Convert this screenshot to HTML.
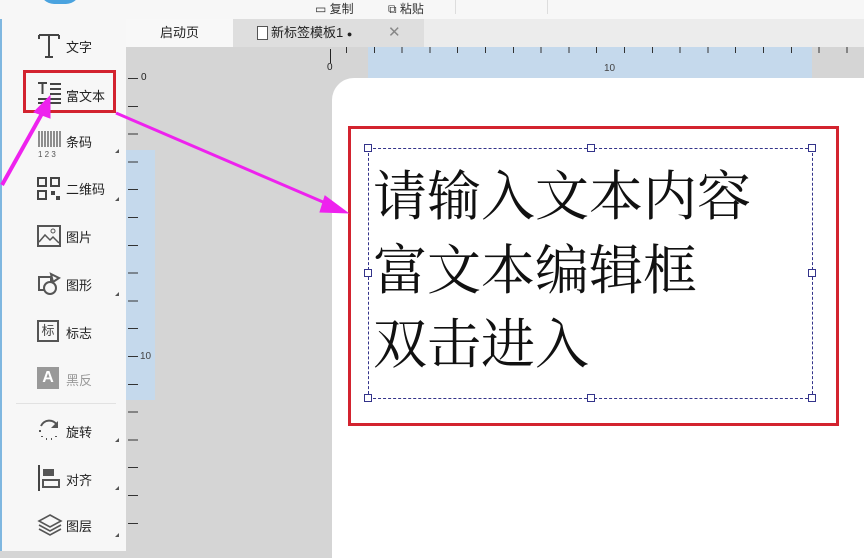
<!DOCTYPE html>
<html><head><meta charset="utf-8"><style>
*{margin:0;padding:0;box-sizing:border-box}
body{width:864px;height:551px;overflow:hidden;position:relative;background:#d5d5d5;font-family:"Liberation Sans","Noto Sans CJK SC",sans-serif}
.abs{position:absolute}
.top{left:0;top:0;width:864px;height:19px;background:#f7f7f7}
.left{left:0;top:19px;width:126px;height:532px;background:#f7f7f7;border-left:2px solid #7fb7e0}
.item{position:absolute;left:64px;font-size:13px;color:#222}
.tri{position:absolute;left:113px;width:0;height:0;border-left:4px solid transparent;border-bottom:4px solid #555}
.ic{position:absolute;left:35px}
</style></head><body>
<div class="abs top"></div>
<div class="abs" style="left:40px;top:-10px;width:40px;height:14px;border-radius:0 0 20px 20px;background:#4aa3df"></div>
<div class="abs" style="left:315px;top:0;font-size:12px;color:#333">▭ 复制</div>
<div class="abs" style="left:388px;top:0;font-size:12px;color:#333">⧉ 粘贴</div>
<div class="abs" style="left:455px;top:0;width:1px;height:14px;background:#ddd"></div>
<div class="abs" style="left:547px;top:0;width:1px;height:14px;background:#ddd"></div>
<!-- tabs -->
<div class="abs" style="left:126px;top:19px;width:738px;height:28px;background:#ececec"></div>
<div class="abs" style="left:126px;top:19px;width:107px;height:28px;background:#f8f8f8;font-size:13px;text-align:center;line-height:28px;color:#222">启动页</div>
<div class="abs" style="left:233px;top:19px;width:191px;height:28px;background:#dedede;font-size:13px;line-height:28px;color:#222;padding-left:38px">新标签模板1 <span style="font-size:9px">●</span><span style="position:absolute;left:155px;color:#888;font-size:15px">✕</span></div>
<div class="abs" style="left:257px;top:26px;width:11px;height:14px;border:1px solid #555;background:#fff"></div>
<!-- ruler top -->
<div class="abs" style="left:368px;top:47px;width:444px;height:31px;background:#c5d9ec"></div>
<div class="abs" style="left:330px;top:49px;width:1px;height:14px;background:#222"></div>
<div class="abs" style="left:327px;top:62px;font-size:10px;color:#222">0</div>
<div class="abs" style="left:604px;top:63px;font-size:10px;color:#444">10</div>
<div class="abs" style="left:346px;top:47px;width:520px;height:6px;background:repeating-linear-gradient(90deg,#333 0 1px,transparent 1px 27.8px)"></div>
<!-- ruler left -->
<div class="abs" style="left:126px;top:150px;width:29px;height:250px;background:#c5d9ec"></div>
<div class="abs" style="left:128px;top:78px;width:10px;height:470px;background:repeating-linear-gradient(180deg,#333 0 1px,transparent 1px 27.8px)"></div>
<div class="abs" style="left:141px;top:72px;font-size:10px;color:#222">0</div>
<div class="abs" style="left:140px;top:351px;font-size:10px;color:#444">10</div>
<!-- label -->
<div class="abs" style="left:332px;top:78px;width:540px;height:480px;background:#fff;border-radius:22px 0 0 0"></div>
<div class="abs" style="left:348px;top:126px;width:491px;height:300px;border:3px solid #d3232f"></div>
<div class="abs" style="left:368px;top:148px;width:445px;height:251px;border:1px dashed #33338a"></div>
<div class="abs" style="left:364px;top:144px;width:8px;height:8px;border:1px solid #33338a;background:#fff"></div>
<div class="abs" style="left:587px;top:144px;width:8px;height:8px;border:1px solid #33338a;background:#fff"></div>
<div class="abs" style="left:808px;top:144px;width:8px;height:8px;border:1px solid #33338a;background:#fff"></div>
<div class="abs" style="left:364px;top:269px;width:8px;height:8px;border:1px solid #33338a;background:#fff"></div>
<div class="abs" style="left:808px;top:269px;width:8px;height:8px;border:1px solid #33338a;background:#fff"></div>
<div class="abs" style="left:364px;top:394px;width:8px;height:8px;border:1px solid #33338a;background:#fff"></div>
<div class="abs" style="left:587px;top:394px;width:8px;height:8px;border:1px solid #33338a;background:#fff"></div>
<div class="abs" style="left:808px;top:394px;width:8px;height:8px;border:1px solid #33338a;background:#fff"></div>
<div class="abs" style="left:373px;top:156px;font-family:'Noto Serif CJK SC',serif;font-size:54px;line-height:74px;color:#111">请输入文本内容<br>富文本编辑框<br>双击进入</div>
<!-- left panel -->
<div class="abs left">
<svg class="ic" style="top:14px" width="24" height="26"><path d="M2 2H22M2 2V6M22 2V6M12 2V24M8 24H16" stroke="#444" stroke-width="2" fill="none"/></svg>
<div class="item" style="top:18px">文字</div>
<svg class="ic" style="top:62px" width="26" height="24"><path d="M1 2H10M5.5 2V13M13 3H24M13 8H24M13 13H24M1 18H24M1 22H24" stroke="#444" stroke-width="2" fill="none"/></svg>
<div class="item" style="top:67px">富文本</div>
<svg class="ic" style="top:112px" width="24" height="28"><path d="M2 0V16M5 0V16M8 0V16M11 0V16M14 0V16M17 0V16M20 0V16M23 0V16" stroke="#555" stroke-width="1.3"/><text x="1" y="26" font-size="8" fill="#555">1 2 3</text></svg>
<div class="item" style="top:113px">条码</div><div class="tri" style="top:130px"></div>
<svg class="ic" style="top:158px" width="24" height="24"><g fill="none" stroke="#444" stroke-width="2"><rect x="1" y="1" width="8" height="8"/><rect x="14" y="1" width="8" height="8"/><rect x="1" y="14" width="8" height="8"/></g><rect x="14" y="14" width="4" height="4" fill="#444"/><rect x="19" y="19" width="4" height="4" fill="#444"/></svg>
<div class="item" style="top:160px">二维码</div><div class="tri" style="top:178px"></div>
<svg class="ic" style="top:206px" width="24" height="22"><rect x="1" y="1" width="22" height="20" fill="none" stroke="#555" stroke-width="2"/><path d="M2 17L8 10L13 15L16 12L22 18" stroke="#555" stroke-width="1.5" fill="none"/><circle cx="16" cy="6" r="2" fill="none" stroke="#555"/></svg>
<div class="item" style="top:208px">图片</div>
<svg class="ic" style="top:253px" width="24" height="24"><path d="M2 5H14V18H2Z" fill="none" stroke="#555" stroke-width="2"/><circle cx="13" cy="16" r="6" fill="#f7f7f7" stroke="#555" stroke-width="2"/><path d="M14 2L22 6L16 10Z" fill="#f7f7f7" stroke="#555" stroke-width="2"/></svg>
<div class="item" style="top:256px">图形</div><div class="tri" style="top:273px"></div>
<div class="abs" style="left:35px;top:301px;width:22px;height:22px;border:2px solid #555;font-size:13px;text-align:center;line-height:18px;color:#444">标</div>
<div class="item" style="top:304px">标志</div>
<div class="abs" style="left:35px;top:348px;width:22px;height:22px;background:#999;color:#fff;font-weight:bold;font-size:16px;text-align:center;line-height:22px">A</div>
<div class="item" style="top:351px;color:#999">黑反</div>
<div class="abs" style="left:14px;top:384px;width:100px;height:1px;background:#e2e2e2"></div>
<svg class="ic" style="top:399px" width="24" height="24"><path d="M4 8A9 9 0 0 1 20 7" stroke="#555" stroke-width="2" fill="none"/><path d="M21 3V10H14Z" fill="#555"/><path d="M3 12V14M5 18V19M9 21H10M14 21H15M19 18V19" stroke="#555" stroke-width="2"/></svg>
<div class="item" style="top:403px">旋转</div><div class="tri" style="top:419px"></div>
<svg class="ic" style="top:446px" width="24" height="26"><path d="M2 0V26" stroke="#444" stroke-width="2"/><rect x="6" y="4" width="11" height="7" fill="#555"/><rect x="6" y="15" width="16" height="7" fill="none" stroke="#555" stroke-width="2"/></svg>
<div class="item" style="top:451px">对齐</div><div class="tri" style="top:467px"></div>
<svg class="ic" style="top:494px" width="26" height="26"><path d="M13 2L24 8L13 14L2 8Z" fill="none" stroke="#555" stroke-width="1.6"/><path d="M2 12L13 18L24 12M2 16L13 22L24 16" fill="none" stroke="#555" stroke-width="1.6"/></svg>
<div class="item" style="top:497px">图层</div><div class="tri" style="top:514px"></div>
</div>
<div class="abs" style="left:23px;top:70px;width:93px;height:43px;border:3px solid #d3232f"></div>
<!-- arrows -->
<svg class="abs" style="left:0;top:0" width="864" height="551"><g fill="#ee22ee" stroke="#ee22ee"><path d="M2 185L44 110" stroke-width="4"/><path d="M50 96L34 112L50 118Z"/><path d="M116 113L330 205" stroke-width="3"/><path d="M348 213L325 196L320 212Z"/></g></svg>
</body></html>
